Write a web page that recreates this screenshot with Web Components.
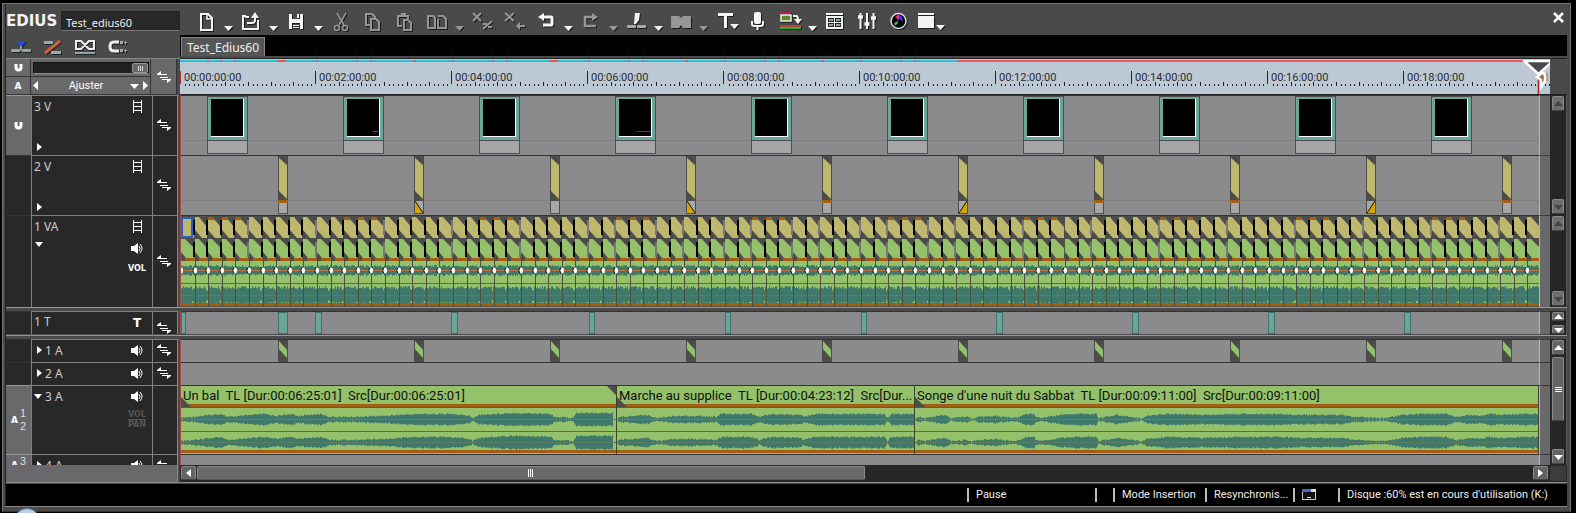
<!DOCTYPE html>
<html lang="fr">
<head>
<meta charset="utf-8">
<title>EDIUS - Test_edius60</title>
<style>
html,body{margin:0;background:#000;min-height:100%}
body{font:11px/14px "Noto Sans","Open Sans",sans-serif;color:#e8e8e8;
--frame:#4a4a4a;--panel:#69696b;--dark:#282828;--edge:#808080;--lane:#8b8a8d;--line:#333;
--olive:#beb86e;--green:#95c16b;--teal:#6ba69b;--wave:#3f796c;--rust:#a15e14;--shade:#4c4c48}
</style>
</head>
<body>
<edius-window>
  <title-bar slot="title"></title-bar>
  <ruler-head slot="ruler-head"></ruler-head>
  <time-ruler slot="ruler"></time-ruler>
  <track-group slot="tracks">
    <track-row name="3 V" icons="film" lane="thumbs" patch="magnet" sync size="60"></track-row>
    <track-row name="2 V" icons="film" lane="video" sync size="60"></track-row>
    <scroll-bar slot="scroll" off></scroll-bar>
  </track-group>
  <track-group slot="tracks">
    <track-row name="1 VA" icons="film,speaker,vol" lane="va" open sync size="92"></track-row>
    <scroll-bar slot="scroll" off></scroll-bar>
  </track-group>
  <track-group slot="tracks" split>
    <track-row name="1 T" icons="title" lane="titles" plain sync size="23"></track-row>
    <scroll-bar slot="scroll" small></scroll-bar>
  </track-group>
  <track-group slot="tracks" split>
    <track-row name="1 A" icons="speaker" lane="audio" inline sync size="23"></track-row>
    <track-row name="2 A" icons="speaker" lane="none" inline sync size="23"></track-row>
    <track-row name="3 A" icons="speaker,volpan" lane="none" inline open patch="1,2" size="69">
      <audio-clip style="flex:0 0 436px" start="0" fade="both">Un bal  TL [Dur:00:06:25:01]  Src[Dur:00:06:25:01]</audio-clip>
      <audio-clip style="flex:0 0 298px" start="436" fade="in">Marche au supplice  TL [Dur:00:04:23:12]  Src[Dur...</audio-clip>
      <audio-clip style="flex:1 1 0" start="734" fade="in">Songe d'une nuit du Sabbat  TL [Dur:00:09:11:00]  Src[Dur:00:09:11:00]</audio-clip>
    </track-row>
    <track-row name="4 A" icons="speaker" lane="none" inline sync patch="3," size="11"></track-row>
    <scroll-bar slot="scroll" thumb></scroll-bar>
  </track-group>
  <time-scroll slot="hscroll"></time-scroll>
  <status-bar slot="status"></status-bar>
</edius-window>

<script>
const el=(self,css,html)=>{const r=self.attachShadow({mode:'open'});
  r.innerHTML='<style>*,:host{box-sizing:border-box}button{all:unset;box-sizing:border-box;display:block}svg{display:block}'+css+'</style>'+html;return r};

/* ---------- window shell ---------- */
customElements.define('edius-window',class extends HTMLElement{connectedCallback(){
 el(this,`
 :host{display:block;position:relative;overflow:hidden;min-height:100vh;background:#000;padding:3px 4px 2px 2px}
 .frame{border:1px solid #777;border-bottom-color:#333;background:var(--frame);margin-right:1px;padding:0 3px 0 2px}
 .body{border-left:1px solid #222}
 .rule{display:flex}
 .rule ::slotted(time-ruler){flex:1}
 .corner{flex:0 0 17px;border-top:1px solid #222;border-bottom:1px solid #222}
 .bottom{display:flex;border-bottom:1px solid #8a8a8a;height:18px}
 .pad{flex:0 0 171px;background:var(--panel)}
 .bar{flex:0 0 3px;background:var(--frame);border-left:1px solid #888}
 .bottom ::slotted(time-scroll){flex:1}
 .foot{height:5px;border-top:1px solid #888}
 .orb{position:absolute;left:14px;top:508px;width:26px;height:26px;border-radius:50%;background:#b7cfe0;border:1px solid #5d7f99}
 `,`<div class="frame"><div class="body">
 <slot name="title"></slot>
 <div class="rule"><slot name="ruler-head"></slot><slot name="ruler"></slot><div class="corner"></div></div>
 <slot name="tracks"></slot>
 <div class="bottom"><div class="pad"></div><div class="bar"></div><slot name="hscroll"></slot></div>
 <slot name="status"></slot></div><div class="foot"></div></div><div class="orb"></div>`)}});

/* ---------- toolbar ---------- */
const S='fill="none" stroke="currentColor"';
const ICONS={
 doc:`<path ${S} stroke-width="2" d="M11 9h7l4 4v12H11z"/><path ${S} stroke-width="1.5" d="M17 9v5h5"/>`,
 open:`<path ${S} stroke-width="2" d="M14 12h-3l-1-1H8v13h15v-9"/><path ${S} stroke-width="2" d="M12 18h5q3 0 3-3v-4"/><path fill="currentColor" d="M16 13l4-6 4 6z"/>`,
 save:`<path fill="currentColor" fill-rule="evenodd" d="M9 9h14v15H9zM12 9v5h8V9zm0 9v6h8v-6z"/><path fill="currentColor" d="M17 9h2v4h-2zM13 20h6v1h-6zM13 22h6v1h-6z"/>`,
 cut:`<path ${S} stroke-width="1.5" d="M12 8l7 12M21 8l-7 12"/><circle ${S} stroke-width="1.5" cx="12" cy="23" r="2.5"/><circle ${S} stroke-width="1.5" cx="20" cy="23" r="2.5"/>`,
 copy:`<path ${S} stroke-width="2" d="M14 20H9V9h6l3 3v2M14 14h5l3 3v8h-8z"/>`,
 paste:`<path ${S} stroke-width="2" d="M13 21H9V11h10V14M15 15h4l3 3v7h-7z"/><path fill="currentColor" d="M12 8h5v4h-5z"/>`,
 dupe:`<path ${S} stroke-width="2" d="M7 11h5l2 2v10H7zM17 11h5l3 3v9h-8v-9"/>`,
 xcut:`<path ${S} stroke-width="2" d="M7 8l8 8M15 8l-8 8M17 24l9-8"/><path ${S} stroke-width="2" d="M17 19h4M22 22h4"/>`,
 xback:`<path ${S} stroke-width="2" d="M7 8l9 8M16 8l-9 8M19 21h8"/><path fill="currentColor" d="M18 21l4-4v8z"/>`,
 undo:`<path ${S} stroke-width="3" d="M13 12h8q1 0 1 1v6q0 1-1 1h-8"/><path fill="currentColor" d="M8 12l6-4v8z"/>`,
 redo:`<path ${S} stroke-width="2.500" d="M18 12h-8v9h11"/><path fill="currentColor" d="M23 12l-6-4v8z"/>`,
 split:`<path fill="currentColor" d="M15 8h5l-1 7-3 4h-2z"/><rect x="7" y="20" width="9" height="3" rx="1" fill="#aaa"/><rect x="17" y="20" width="9" height="3" rx="1" fill="#aaa"/>`,
 trans:`<path fill="currentColor" d="M6 11h8l2 2 2-2h8v12h-8l-2-3-2 3H6z"/>`,
 text:`<path fill="currentColor" d="M8 8h15v3h-6v12h-3V11H8zM20 19h9l-4.500 5z"/>`,
 mic:`<rect x="12" y="7" width="7" height="12" rx="2" fill="currentColor"/><path ${S} stroke-width="2" d="M10 16v3q0 2 2 2h7q2 0 2-2v-3M15.500 21v4"/>`,
 render:`<path fill="#b02050" d="M6 7h11v2H6z"/><path fill="#5e8a25" stroke="#eee" stroke-width="1.500" d="M7 10h10v6H7z"/><path ${S} stroke-width="2" d="M19 11h3q2 0 2 4"/><path fill="currentColor" d="M20 14h8l-4 5z"/><path fill="#c04038" d="M6 20h21v2H6z"/><path fill="#25b53a" d="M6 22h21v2H6z"/>`,
 bin:`<path fill="currentColor" fill-rule="evenodd" d="M7 8h17v2H7zM7 11h17v13H7zM9 13v4h6v-4zm7 0v4h6v-4zM9 18v4h6v-4zm7 0v4h6v-4z"/><path fill="#8a9" d="M10 14h4v2h-4zM17 14h4v2h-4zM10 19h4v2h-4zM17 19h4v2h-4z"/>`,
 mixer:`<path ${S} stroke-width="2" d="M9.500 8v16M16 8v16M22.500 8v16"/><path ${S} stroke-width="3.500" d="M7 12h5M13.500 19h5M20 13h5"/>`,
 scope:`<circle cx="15.500" cy="16" r="7.500" fill="#000" stroke="#ddd" stroke-width="1.500"/><path fill="#e22" d="M15 15l-3-3 3-2z"/><path fill="#2c4" d="M15 16l-4 2 1 3 3-3z"/><path fill="#34f" d="M16 10l3 2 1 5-4-4z"/><path fill="#d3d" d="M14 11l2-2v7z"/>`,
 window:`<path fill="currentColor" d="M3 8h16v2H3zM3 11h16v12H3zM21 20h9l-4.500 5z"/>`};
customElements.define('tool-button',class extends HTMLElement{connectedCallback(){
 const n=this.getAttribute('icon'),c=this.hasAttribute('caret');
 el(this,`:host{display:flex;flex:none;color:#f4f4f4}:host([dim]){color:#969696}
 svg{filter:drop-shadow(1px 1px 0 #1c1c1c)}`,
 `<button aria-label="${n}"><svg width="32" height="31" viewBox="0 -1 32 31">${ICONS[n]}</svg></button>`+
 (c?`<button aria-label="${n} menu"><svg width="13" height="31" viewBox="0 -1 13 31"><path fill="currentColor" d="M2 21h9l-4.500 5z"/></svg></button>`:''))}});

customElements.define('title-bar',class extends HTMLElement{connectedCallback(){
 const t=['doc|c','open|c','save|c','cut|d','copy|d','paste|d','dupe|cd','xcut|d','xback|d','undo|c','redo|cd','split|c','trans|cd','text|','mic|','render|c','bin|','mixer|','scope|','window|'];
 el(this,`:host{display:flex;height:54px}
 .left{flex:0 0 174px;min-width:0;display:flex;flex-direction:column}
 .name{display:flex;align-items:center;height:31px;padding-top:3px}
 b{font:bold 15px/19px "DejaVu Sans",sans-serif;color:#f2f2f2;flex:0 0 55px}
 input{flex:1;min-width:0;height:20px;border:1px solid #222;border-bottom-color:#777;background:var(--dark);color:#eee;font:11px/16px "Noto Sans",sans-serif;padding:3px 4px 0;outline:0}
 .modes{display:flex;gap:10px;padding:3px 0 0 4px}
 .modes svg{filter:drop-shadow(1px 1px 0 #222)}
 .right{flex:1;min-width:0;display:flex;flex-direction:column}
 .tools{display:flex;height:31px;padding-left:10px}
 .close{margin-left:auto}
 .tabs{height:21px;background:#000;display:flex;align-items:flex-end}
 .tabs button{height:19px;margin-left:1px;padding:0 5px;border:1px solid #888;border-bottom:0;background:#565656;color:#f0f0f0;font:12px/19px "Noto Sans",sans-serif}
 `,`<div class="left"><div class="name"><b>EDIUS</b><input aria-label="Projet" value="Test_edius60"></div>
 <div class="modes">
 <button aria-label="Insertion"><svg width="22" height="18"><path fill="#2050e0" d="M6 3h10l-5 7z"/><rect x="1" y="11" width="9" height="3" rx="1" fill="#9aa69a"/><rect x="12" y="11" width="9" height="3" rx="1" fill="#9aa69a"/><path stroke="#eee" d="M11 8v5"/></svg></button>
 <button aria-label="Synchro"><svg width="22" height="18"><rect x="2" y="3" width="9" height="3" fill="#9aa"/><rect x="9" y="13" width="10" height="3" fill="#9aa"/><path stroke="#d0603a" stroke-width="3" d="M3 15L18 3"/></svg></button>
 <button aria-label="Ripple"><svg width="22" height="18"><path fill="none" stroke="#eee" stroke-width="2" d="M2 3h5l8 8h5V3h-5l-8 8H2z"/><path fill="#8aa5ad" d="M1 14h20v2H1z"/></svg></button>
 <button aria-label="Magnétisme"><svg width="22" height="18"><path fill="none" stroke="#eee" stroke-width="3" d="M13 4H8q-4 0-4 4.500T8 13h5"/><path fill="#aaa" d="M14 3h3v3h-3zM14 11h3v3h-3zM18 4h3v1h-3zM19 3h1v3h-1zM18 12h3v1h-3zM19 11h1v3h-1z"/></svg></button>
 </div></div>
 <div class="right"><div class="tools">${t.map(x=>{const[n,f]=x.split('|');return`<tool-button icon="${n}" ${f.includes('c')?'caret':''} ${f.includes('d')?'dim':''}></tool-button>`}).join('')}
 <button class="close" aria-label="Fermer"><svg width="18" height="31"><path stroke="#fff" stroke-width="2.500" d="M5 9l9 9M14 9l-9 9"/></svg></button></div>
 <div class="tabs"><button>Test_Edius60</button></div></div>`)}});

/* ---------- ruler ---------- */
const SYNC='<svg width="14" height="12"><path fill="none" stroke="#fff" d="M1 3.500h9M3 6.500h8M5 8.500h8"/><path fill="#fff" d="M0 4V3l4-3v4zM14 8v1l-4 3V8z"/></svg>';
const MAG='<svg width="9" height="9"><path fill="none" stroke="#fff" stroke-width="3" d="M2 1v3q0 3 2.500 3T7 4V1"/></svg>';
customElements.define('ruler-head',class extends HTMLElement{connectedCallback(){
 el(this,`:host{display:grid;grid-template:18px 18px/25px 120px 26px 3px;flex:0 0 174px;background:var(--panel);border-top:1px solid #888;height:37px}
 div{display:flex;align-items:center;justify-content:center;border-right:1px solid #333;border-bottom:1px solid #333}
 .a{font:bold 9px/10px "DejaVu Sans",sans-serif;color:#fff}
 .sync{grid-area:1/3/3/4}.gap{grid-area:1/4/3/5;background:var(--frame);border:0}
 input{appearance:none;margin:0;width:116px;height:12px;background:#222;border:1px solid #111;border-bottom-color:#888}
 input::-webkit-slider-thumb{appearance:none;width:16px;height:10px;border:1px solid #999;border-radius:2px;background:linear-gradient(90deg,#ddd 1px,transparent 1px 2px,#ddd 2px 3px,transparent 3px 4px,#ddd 4px) 5px 2px/5px 5px no-repeat #666}
 .zoom{gap:2px;padding:0 2px}
 select{appearance:none;border:0;background:none;color:#fff;flex:1;min-width:0;text-align:center;text-align-last:center;padding:0 0 0 4px;font:11px/14px Roboto,sans-serif}
 .more{margin-right:2px}
 `,`<div>${MAG}</div><div><input type="range" aria-label="Zoom" value="100"></div><div class="sync">${SYNC}</div><div class="gap"></div>
 <div class="a">A</div><div class="zoom"><button aria-label="Réduire"><svg width="5" height="9"><path fill="#fff" d="M0 4.500L5 0v9z"/></svg></button>
 <select aria-label="Échelle"><option>Ajuster</option></select><svg class="more" width="9" height="6"><path fill="#fff" d="M0 1h9L4.500 6z"/></svg><button aria-label="Agrandir"><svg width="5" height="9"><path fill="#fff" d="M5 4.500L0 0v9z"/></svg></button></div>`)}});

customElements.define('time-ruler',class extends HTMLElement{connectedCallback(){
 let d='';for(let i=1;i<304;i++){const x=Math.round(i*136/30),h=i%30==0?0:(i%5?2:4);if(h)d+=`M${x}.5 27v-${h}`}
 let dots='';for(let b=0;b<6;b++)for(const[o,w]of[[0,2],[40,2],[54,2],[97,8]]){if(b*136+o<760)dots+=`<rect x="${b*136+o+(b||o?0:27)}" width="${w==8&&b%2==0&&b!=4?9:w==8?3:w}" height="2" fill="${w==8?'#e8535b':'#a46cb0'}"/>`}
 el(this,`:host{display:block;position:relative;min-width:0;overflow:hidden;height:37px;background:#bcc8d4;border-top:1px solid #222;border-bottom:1px solid #222}
 .cache{height:2px;margin-top:1px;background:linear-gradient(90deg,#2cc2d2 778px,#ea5860 778px)}
 .seg{display:flex;margin-top:9px}
 span{flex:0 0 136px;height:13px;border-left:1px solid #222;padding-left:3px;font:11px/13px Roboto,sans-serif;color:#2c2c30}
 span:first-child{flex-basis:135px;border-left-color:#a33}
 .ticks{position:absolute;left:0;top:0}
 .head{position:absolute;right:0;top:1px}
 `,`<div class="cache"><svg width="778" height="2">${dots}</svg></div><div class="seg">${[...Array(10)].map((_,i)=>`<span>00:${String(i*2).padStart(2,'0')}:00:00</span>`).join('')}</div>
 <svg class="ticks" width="1370" height="35"><path stroke="#222" d="${d}"/></svg>
 <svg class="head" width="27" height="35"><path stroke="#a22" stroke-width="1.500" d="M15.500 14v21"/><path fill="#4a4a4a" stroke="#fff" stroke-width="2.500" d="M1 1h29L15.500 14z"/><path fill="none" stroke="#d98a4a" stroke-width="2" d="M24 13v8"/><path fill="#8a7060" stroke="#fff" stroke-width="2.500" d="M14 17l5-4q3 0 3 3v5l-4 6v-7z"/></svg>`)}});

/* ---------- scroll bars ---------- */
const arrow=d=>`<svg width="9" height="6"><path fill="currentColor" d="${d=='u'?'M0 5h9L4.500 0z':'M0 1h9L4.500 6z'}"/></svg>`;
customElements.define('scroll-bar',class extends HTMLElement{connectedCallback(){
 el(this,`:host{display:flex;flex:0 0 17px;flex-direction:column;background:#252525;padding:1px 2px;border-right:1px solid #555}
 button{flex:0 0 15px;display:flex;align-items:center;justify-content:center;border-radius:2px;background:#646464;border:1px solid #8a8a8a;border-bottom-color:#444;color:#fff}
 :host([off]) button{color:#444;background:#6e6e70}
 :host([small]) button{flex-basis:9px}
 .t{flex:1;padding:2px 0}.thumb{height:64px;border-radius:2px;border:1px solid #8a8a8a;border-bottom-color:#444;background:#646466;display:flex;align-items:center;justify-content:center}
 `,`<button aria-label="Haut">${arrow('u')}</button><div class="t">${this.hasAttribute('thumb')?'<div class="thumb"><svg width="7" height="5"><path stroke="#fff" d="M0 .5h7M0 2.500h7M0 4.500h7"/></svg></div>':''}</div><button aria-label="Bas">${arrow('d')}</button>`)}});
customElements.define('time-scroll',class extends HTMLElement{connectedCallback(){
 el(this,`:host{display:flex;background:#272727;padding:1px 0 1px 1px}
 button{flex:0 0 15px;height:14px;border:1px solid #8a8a8a;border-bottom-color:#444;border-radius:2px;background:#646464;display:flex;align-items:center;justify-content:center}
 .t{flex:1;padding:0 1px}.thumb{width:50%;height:14px;border:1px solid #8a8a8a;border-bottom-color:#555;border-radius:2px;background:#69696b;display:flex;align-items:center;justify-content:center}
 .corner{flex:0 0 16px;margin:0 1px 0 2px;background:#3c3c3c}
 `,`<button aria-label="Gauche"><svg width="5" height="8"><path fill="#fff" d="M5 0v8L0 4z"/></svg></button><div class="t"><div class="thumb"><svg width="6" height="8"><path stroke="#fff" d="M.5 0v8M2.500 0v8M4.500 0v8"/></svg></div></div><button aria-label="Droite"><svg width="5" height="8"><path fill="#fff" d="M0 0v8l5-4z"/></svg></button><div class="corner"></div>`)}});

/* ---------- tracks ---------- */
customElements.define('track-group',class extends HTMLElement{connectedCallback(){
 el(this,`:host{display:flex;position:relative}
 :host([split]){border-top:1px solid #9a9a9a;padding-top:3px;background:var(--frame)}
 .rows{flex:1;min-width:0;display:flex;flex-direction:column}`,
 `<div class="rows"><slot></slot></div><slot name="scroll"></slot>`)}});

const GLYPH={
 film:'<svg width="11" height="13"><path fill="none" stroke="#fff" d="M1.500 0v13M9.500 0v13M1 2.500h9M1 6.500h9M1 10.500h9"/></svg>',
 speaker:'<svg width="13" height="11"><path fill="#fff" d="M0 3h3l4-3v11L3 8H0z"/><path fill="none" stroke="#fff" d="M8 3q2 2.500 0 5M9 1q4 4 0 9"/></svg>',
 vol:'<b>VOL</b>',title:'<b class="t">T</b>',volpan:'<b class="dim"><i>VOL</i><i>PAN</i></b>'};
const poly=(p,f)=>`<polygon points="${p}" fill="${f}"/>`, rect=(x,y,w,h,f,e='')=>`<rect x="${x}" y="${y}" width="${w}" height="${h}" fill="${f}" ${e}/>`;
const noise=n=>{const v=Math.sin(n*12.9898)*43758.5453;return v-Math.floor(v)};
const V='var(--';
const LANES={
 none(){return''},
 thumbs(){let s=rect(0,45,1360,1,'#7f7f80');for(let i=0;i<10;i++){const x=27+136*i;
  s+=rect(x,1,41,58,'#4d4d4d')+rect(x+1,2,39,43,V+'teal)')+rect(x+4,4,33,38,'#fff')+rect(x+4,4,32,37,'#000')+rect(x+1,46,39,12,'#a5a5a6');
  if(i==1)s+=rect(x+30,36,5,1,'#1b7a44');if(i==3)s+=rect(x+21,36,15,1,'#14602f')}return s},
 video(){let s=rect(0,45,1360,1,'#7f7f80');'olwlorooro'.split('').forEach((k,i)=>{const x=98+136*i;
  s+=rect(x,1,10,58,V+'shade)')+poly(`${x+1},3 ${x+9},10 ${x+9},44 ${x+1},36`,V+'olive)')+rect(x+1,46,8,12,'#a8a8a8');
  if(k=='o')s+=rect(x,45,10,3,V+'rust)');
  if(k=='l')s+=poly(`${x+1},46 ${x+1},58 ${x+9},58`,'#d3a800')+`<path stroke="#111" d="M${x+1} 46l8 12"/>`;
  if(k=='r')s+=poly(`${x+9},46 ${x+1},58 ${x+9},58`,'#d3a800')+`<path stroke="#111" d="M${x+9} 46l-8 12"/>`});return s},
 va(){let s=rect(0,1,1360,45,V+'shade)'),w='',lines='',marks='';
  const X=i=>Math.round(1+13.6*i);
  for(let i=0;i<100;i++){const x=X(i),r=X(i+1)-1,c=[2,3,4].includes(i%10);
   s+=poly(`${x},2 ${x+4},2 ${r},12 ${r},23 ${x+7},23 ${x},15`,V+'olive)');
   if(c)s+=rect(x,2,6,3,V+'rust)');
   s+=rect(x+4,43,r-x-3,3,V+'rust)')+poly(`${x},24 ${x+4},24 ${r},33 ${r},43 ${x+5},43 ${x},37`,V+'green)');
   const gray=(i<56&&i%5==4)||(i>30&&i%5==1);
   if(i<99){if(i!=64){const k=gray?'#777':'#000';s+=rect(r-1,5,2,15,k)+rect(r-1,27,2,15,k)}
     else s+=rect(r,24,1,20,'#4a5a30')}
   lines+=`M${X(i+1)}.5 46v46`;
   marks+=`<ellipse cx="${x}" cy="55.5" rx="2" ry="3" fill="#fff"/><path fill="none" stroke="#111" d="M${x-1} 52.500q-2.500 3 0 6"/>`}
  s+=rect(1,3,12,19,V+'olive)')+`<rect x="2" y="3" width="10" height="19" fill="none" stroke="#2464c8" stroke-width="2"/>`;
  s+=rect(0,46,1360,43,V+'green)');
  for(let x=0;x<1360;x++){const q=(x%13.6)/13.6,a=3+noise(x)*2-(q>.85?1:0),b=6+noise(x+5000)*3-(q>.88?2:0);
   w+=`M${x}.5 ${55-a}V${56+a}M${x}.5 ${80-b}V${81+b}`}
  s+=`<path stroke="var(--wave)" fill="none" d="${w}"/>`+rect(0,55,1360,1,'#c2703a')+rect(0,68,1360,1,'#2b7a80')+rect(0,80,1360,1,'#5c7d60')+rect(0,88,1360,3,V+'rust)')+rect(0,91,1360,1,'#4c5040');
  return s+`<path stroke="#4c5040" d="${lines}"/>`+marks},
 titles(){return[[1,5],[98,10],[135,7],[271,7],[409,6],[545,6],[681,6],[816,7],[952,7],[1088,7],[1224,7]].map(([x,w])=>rect(x,1,w,22,'#42706c')+rect(x+1,2,w-2,20,V+'teal)')).join('')},
 audio(){let s='';for(let i=0;i<10;i++){const x=98+136*i;s+=rect(x,1,10,22,V+'shade)')+poly(`${x+1},2 ${x+9},11 ${x+9},19 ${x+1},10`,V+'green)')}return s}};

customElements.define('track-row',class extends HTMLElement{connectedCallback(){
 const g=n=>this.getAttribute(n),h=n=>this.hasAttribute(n),inl=h('inline'),open=h('open'),size=+g('size');
 const tri=open?'<svg width="8" height="5"><path fill="#fff" d="M0 0h8L4 5z"/></svg>':'<svg width="5" height="8"><path fill="#fff" d="M0 0v8l5-4z"/></svg>';
 const p=g('patch');const patch=!p?'':p=='magnet'?MAG:`<b>A</b><span>${p.split(',').filter(Boolean).map(x=>`<em>${x}</em>`).join('')}</span>`;
 const svg=LANES[g('lane')]();
 el(this,`:host{display:flex;height:${size}px;overflow:hidden}
 .patch{flex:0 0 25px;display:flex;align-items:center;justify-content:center;gap:2px;background:${p?'var(--panel)':'var(--dark)'};border-top:1px solid ${p?'#999':'#333'};color:#fff}
 .patch b{font:bold 9px/11px "DejaVu Sans",sans-serif}
 :host([size="11"]) .patch{align-items:flex-start}:host([size="11"]) .patch b{padding-top:5px}
 em{display:block;font:11px/13px "Liberation Sans",sans-serif;color:#ddd}
 .name{flex:1;display:flex;justify-content:space-between;padding:${inl||h('plain')?'2px':'3px'} 8px 0 2px;background:var(--dark);border:1px solid var(--edge);border-width:1px 0 0 1px;font:12px/15px "Noto Sans",sans-serif;color:#ccc}
 .head{flex:0 0 171px;display:flex;background:var(--dark)}
 .l{display:flex;flex-direction:${inl?'row':'column'};${inl?'align-items:center;height:16px;gap:3px;padding-left:'+(open?0:3)+'px':'justify-content:'+(open?'flex-start;gap:8px':'space-between')+';padding-bottom:4px'}}
 .l button{${inl?'':'padding-left:'+(open?1:3)+'px'}}
 .r{display:flex;flex-direction:column;align-items:center;width:20px;gap:${size>80?'10px':'8px'};padding-top:${inl?'3px':h('plain')?'2px':'1px'};margin-right:-3px}
 .r b{font:bold 8px/9px "DejaVu Sans",sans-serif;color:#fff}.r .t{font-size:12px;line-height:14px}
 .r .dim{color:#555}.dim i{display:block;font-style:normal;line-height:9px}.dim i:first-child{border-bottom:1px solid #555}
 .sync{flex:0 0 25px;display:flex;align-items:center;justify-content:center;padding:${h('plain')?'10px 3px 0 0':'0 3px 2px 0'};background:var(--dark);border:1px solid var(--edge);border-width:1px 0 0 1px}
 :host([size="11"]) .sync{align-items:flex-start;padding-top:5px}
 .bar{flex:0 0 3px;background:var(--frame);border-left:1px solid #888}
 .lane{flex:1;min-width:0;display:flex;background:var(--lane);border-left:1px solid #b04848;overflow:hidden}
 .in{flex:1;min-width:0;overflow:hidden;border-top:1px solid var(--line);display:flex}
 .in svg{margin:-1px 0 0 -1px;flex:none}
 .tail{flex:0 0 11px;background:#69696c;border-left:1px solid #b5b5b5;border-top:1px solid #3c3c3e}
 ::slotted(audio-clip){min-width:0}
 `,`<div class="head"><div class="patch">${patch}</div><div class="name"><div class="l">${inl?`<button aria-label="Déplier">${tri}</button><span>${g('name')}</span>`:`<span>${g('name')}</span>${h('plain')?'':`<button aria-label="Déplier">${tri}</button>`}`}</div>
 <div class="r">${g('icons').split(',').map(i=>GLYPH[i]).join('')}</div></div><div class="sync">${h('sync')?SYNC:''}</div></div><div class="bar"></div>
 <div class="lane"><div class="in">${svg?`<svg width="1360" height="${size}">${svg}</svg>`:'<slot></slot>'}</div><div class="tail"></div></div>`)}});

const ENV=[1,2,20,4,40,6,46,3,60,4,82,6,96,4,110,6,115,4,140,6,148,3,170,3,200,4,216,5,240,6,270,6,288,4,291,2,298,5,330,7,370,6,373,3,392,2,395,7,431,7,432,0,436,0,437,3,465,5,476,2,492,4,512,4,535,3,540,6,570,6,578,3,590,6,618,5,623,3,632,6,703,6,706,2,710,6,732,6,734,0,736,3,744,2,752,3,762,5,770,2,786,3,790,1,796,3,814,4,820,3,835,2,845,6,853,6,854,3,860,2,880,5,895,6,915,6,917,2,930,4,935,5,957,2,960,1,965,4,985,6,1020,5,1060,6,1100,6,1120,5,1160,5,1175,3,1195,2,1205,2,1220,5,1240,6,1265,6,1275,3,1290,5,1300,4,1307,6,1320,5,1340,6,1357,6,1358,1,2000,1];
const env=x=>{let i=0;while(i<ENV.length-4&&ENV[i+2]<x)i+=2;const t=Math.max(0,Math.min(1,(x-ENV[i])/(ENV[i+2]-ENV[i])));return ENV[i+1]+(ENV[i+3]-ENV[i+1])*t};
customElements.define('audio-clip',class extends HTMLElement{connectedCallback(){
 const s=+this.getAttribute('start'),f=this.getAttribute('fade');let w='';
 for(let i=0;i<640;i++){const x=s+i,e=env(x);if(e>.3){const a=e+.3-noise(x)*1.500,b=e+.3-noise(x+900)*1.500;w+=`M${i}.5 ${11.5-a}v${2*a}M${i}.5 ${34.5-b}v${2*b}`}}
 el(this,`:host{display:block;overflow:hidden;background:var(--green);border-right:1px solid #3c4430;color:#101010}
 .cap{position:relative;height:21px;border-bottom:3px solid var(--rust);font:13px/20px Roboto,sans-serif;white-space:pre;padding-left:2px}
 .f{position:absolute;left:0;bottom:-3px}.o{position:absolute;right:0;top:0}
 .w{border-top:1px solid #55603c;border-bottom:1px solid #222;height:46px}
 `,`<div class="cap"><slot></slot><svg class="f" width="11" height="10">${poly('0,0 10,10 0,10','#4c4c48')}</svg>${f=='both'?`<svg class="o" width="9" height="9">${poly('0,0 9,0 9,9','#4c4c48')}</svg>`:''}</div>
 <div class="w"><svg width="640" height="45"><path stroke="var(--wave)" fill="none" d="${w}"/>${rect(0,11,640,1,'#a8663c')+rect(0,23,640,1,'#2b7a80')+rect(0,34,640,1,'#5c7d60')+rect(0,42,640,3,V+'rust)')}</svg></div>`)}});

/* ---------- status ---------- */
customElements.define('status-bar',class extends HTMLElement{connectedCallback(){
 el(this,`:host{display:flex;justify-content:flex-end;align-items:center;height:23px;background:#000;border-top:1px solid var(--frame);color:#eee;font:11px/14px Roboto,sans-serif}
 span{flex:0 0 auto;height:14px;border-left:2px solid #bbb;padding-left:7px;white-space:nowrap}
 `,`<span style="width:128px">Pause</span><span style="width:18px"></span><span style="width:92px">Mode Insertion</span><span style="width:88px">Resynchronis...</span><span style="width:45px"><svg width="14" height="12"><rect x=".5" y="1.500" width="13" height="10" fill="#111" stroke="#ccc"/><path fill="#4a64d0" d="M0 1h9v3H0z"/><path fill="#ddd" d="M9 1h5v3H9zM5 9h4v1H5z"/></svg></span><span style="width:229px">Disque :60% est en cours d'utilisation (K:)</span>`)}});
</script>
</body>
</html>
